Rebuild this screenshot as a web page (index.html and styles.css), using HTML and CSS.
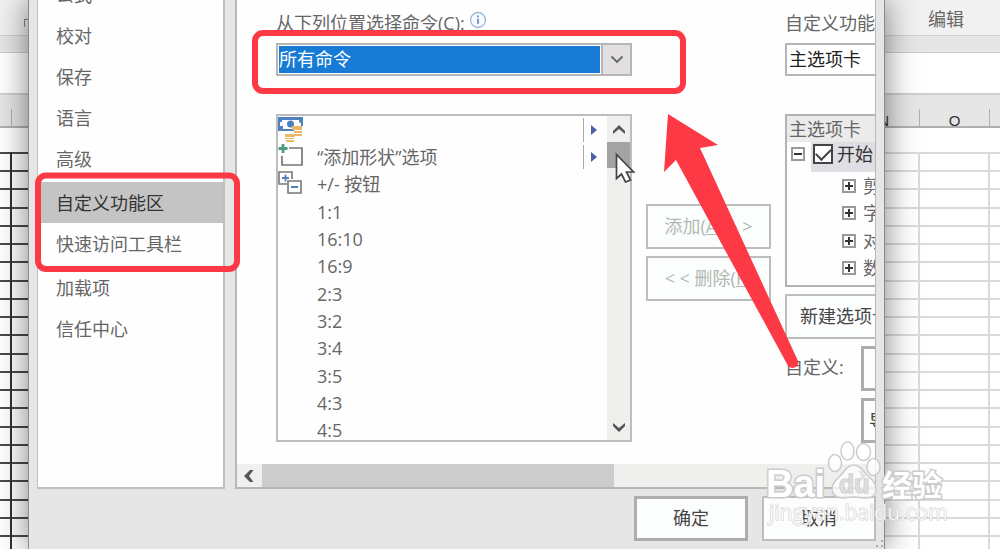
FILE: index.html
```html
<!DOCTYPE html>
<html lang="zh-CN">
<head>
<meta charset="utf-8">
<meta name="viewport" content="width=device-width, initial-scale=1">
<title>自定义功能区</title>
<link rel="stylesheet" href="styles.css">
</head>
<body>
<div class="desktop">
  <div class="workbook">
    <div class="ribbon"><span class="corner"></span><span>编辑</span></div>
    <div class="ribbon-edge"></div>
    <div class="formula-bar"></div>
    <div class="col-heads">
      <span class="head head-left"></span>
      <span class="head head-n">N</span>
      <span class="head head-o">O</span>
      <span class="head-rest"></span>
    </div>
    <div class="cells">
      <div class="col bold head-left"></div>
      <div class="col bold col-covered"></div>
      <div class="col head-n"></div>
      <div class="col head-o"></div>
      <div class="col head-rest"></div>
    </div>
  </div>

  <section class="dialog" aria-label="选项">
    <div class="body">
      <nav class="nav">
        <div class="nav-list">
          <a href="#formula">公式</a>
          <a href="#proof">校对</a>
          <a href="#save">保存</a>
          <a href="#language">语言</a>
          <a href="#advanced">高级</a>
          <a class="group active" href="#ribbon">自定义功能区</a>
          <a href="#quick">快速访问工具栏</a>
          <a class="group" href="#addins">加载项</a>
          <a href="#trust">信任中心</a>
        </div>
      </nav>
      <main class="panel">
        <div class="columns">
          <div class="column">
            <div class="caption">
              <label for="source">从下列位置选择命令(C):</label>
              <svg class="info" viewBox="0 0 18 18"><circle cx="9" cy="9" r="7.5" fill="#f7fbff" stroke="#9db9dc" stroke-width="1.3"/><path d="M9 7.8v5M9 4.6v1.6" stroke="#5b87b8" stroke-width="1.7"/></svg>
            </div>
            <div class="combo">
              <select id="source" class="picked"><option>所有命令</option></select>
              <span class="caret"><svg viewBox="0 0 14 9"><path d="M1.500 1.500 7 7l5.500-5.500" fill="none" stroke="#666" stroke-width="1.800"/></svg></span>
            </div>
            <div class="list">
              <ul class="commands">
                <li>
                  <svg class="icon" viewBox="0 0 26 26"><path d="M0 0h25v9h-9v5H0z" fill="#4d80bd"/><path d="M4 3h17v1q0 2 2 2v3h-7v3H5V9H2V5h2z" fill="#fff"/><circle cx="12.500" cy="7" r="3.500" fill="#4d80bd"/><path d="M14 9h10v4H14zM16 14h8v2h-8zM17 17h7v2h-7zM7 17h10v3H7zM7 21h9v1H7zM8 23h8v2H8z" fill="#e8b867"/></svg>
                  <span></span><i class="more"></i>
                </li>
                <li>
                  <svg class="icon" viewBox="0 0 26 26"><path d="M11 4h13v17H4v-9" fill="none" stroke="#777" stroke-width="1.700"/><path d="M5 0v9M.5 4.500h9" stroke="#4f9a80" stroke-width="2.800"/></svg>
                  <span>“添加形状”选项</span><i class="more"></i>
                </li>
                <li>
                  <svg class="icon" viewBox="0 0 26 26"><path d="M9 13H1V1h13v7M10 10h13v12H10z" fill="none" stroke="#777" stroke-width="1.600"/><path d="M4 7h7M7.500 3.500v7M13 16h7" stroke="#4d80bd" stroke-width="1.800"/></svg>
                  <span>+/- 按钮</span>
                </li>
                <li><span>1:1</span></li>
                <li><span>16:10</span></li>
                <li><span>16:9</span></li>
                <li><span>2:3</span></li>
                <li><span>3:2</span></li>
                <li><span>3:4</span></li>
                <li><span>3:5</span></li>
                <li><span>4:3</span></li>
                <li><span>4:5</span></li>
              </ul>
              <div class="vbar">
                <svg class="arrow" viewBox="0 0 12 10"><path d="M0 9V6L6 0l6 6v3L6 4z" fill="#555"/></svg>
                <div class="vthumb"></div>
                <svg class="arrow" viewBox="0 0 12 10"><path d="M0 1v3l6 6 6-6V1L6 6z" fill="#555"/></svg>
              </div>
            </div>
          </div>

          <div class="column transfer">
            <button class="btn faded" type="button">添加(<u>A</u>) &gt; &gt;</button>
            <button class="btn faded" type="button">&lt; &lt; 删除(<u>R</u>)</button>
          </div>

          <div class="column">
            <div class="caption"><label for="target">自定义功能区</label></div>
            <div class="combo open-end">
              <select id="target" class="plain"><option>主选项卡</option></select>
            </div>
            <div class="tree">
              <div class="tree-head">主选项卡</div>
              <div class="tree-root">
                <button class="toggle" type="button" aria-label="折叠"></button>
                <label class="tab"><input type="checkbox" checked><span>开始</span></label>
              </div>
              <div class="tree-item"><button class="toggle plus" type="button" aria-label="展开"></button><span>剪贴板</span></div>
              <div class="tree-item"><button class="toggle plus" type="button" aria-label="展开"></button><span>字体</span></div>
              <div class="tree-item"><button class="toggle plus" type="button" aria-label="展开"></button><span>对齐方式</span></div>
              <div class="tree-item"><button class="toggle plus" type="button" aria-label="展开"></button><span>数字</span></div>
            </div>
            <button class="btn new-tab" type="button">新建选项卡</button>
            <div class="custom">
              <span class="custom-label">自定义:</span>
              <div class="custom-actions">
                <button class="btn strong" type="button" aria-label="重置"></button>
                <button class="btn strong" type="button">导入/导出</button>
              </div>
            </div>
          </div>
        </div>
        <div class="hbar">
          <svg class="harrow" viewBox="0 0 10 12"><path d="M9.500 0H6L0 6l6 6h3.500L5 6z" fill="#555"/></svg>
          <div class="htrack"><div class="hthumb"></div></div>
          <svg class="harrow" viewBox="0 0 10 12"><path d="M1 1h3l5 5-5 5H1l4-5z" fill="#888"/></svg>
        </div>
      </main>
    </div>
    <footer class="footer">
      <button class="btn strong" type="button">确定</button>
      <button class="btn" type="button">取消</button>
    </footer>
    <svg class="grip" viewBox="0 0 9 9"><path d="M6 0h2v2H6zM6 5h2v2H6zM1 5h2v2H1z" fill="#aaa"/></svg>
  </section>

  <svg class="marks" viewBox="0 0 1000 549">
    <rect x="255" y="33" width="428" height="58" rx="8" fill="none" stroke="#fd3946" stroke-width="6"/>
    <rect x="38" y="175.500" width="199" height="93.500" rx="8" fill="none" stroke="#fd3946" stroke-width="6"/>
    <path d="M668 114l50 31-18 3 98 213q1 6-5 7-4 0-6-4L676 160l-12 12z" fill="#fd3946"/>
    <path d="M616.500 154.500v24l5-4.500 4 8 5-2-4-8h7z" fill="#fff" stroke="#444" stroke-width="1.700"/>
    <g class="brand">
      <text x="766" y="497" font-size="38">Bai</text>
      <ellipse cx="835" cy="463" rx="6.500" ry="8.500"/>
      <ellipse cx="847.500" cy="451" rx="6.500" ry="9"/>
      <ellipse cx="863.500" cy="452" rx="7" ry="8.500"/>
      <ellipse cx="873.500" cy="467" rx="6.500" ry="8.500"/>
      <path d="M854 465c7 0 9 7 14 11 5 4 8 8 8 13 0 6-4 9-10 9-5 0-8-1-12-1s-8 1-12 1c-6 0-10-4-10-9 0-6 4-9 8-13s7-11 14-11z"/>
      <text class="du" x="839" y="493" font-size="25">du</text>
      <text class="cn" x="882" y="496" font-size="30">经验</text>
    </g>
    <text class="site" x="769" y="520" font-size="21">jingyan.baidu.com</text>
  </svg>
</div>
</body>
</html>
```
FILE: styles.css
```css
* { box-sizing: border-box; }

body {
  margin: 0;
  color: #666;
  font: 18px/24px "Open Sans", "Noto Sans CJK SC", sans-serif;
}

button, select { font: inherit; color: inherit; }

.desktop { position: relative; height: 100vh; overflow: hidden; background: #fff; }

/* Workbook behind the dialog */
.workbook { display: flex; flex-direction: column; height: 100%; }
.ribbon {
  display: flex;
  justify-content: space-between;
  height: 36px;
  padding: 7px 36px 0 24px;
  background: #f1f1f1;
  border-bottom: 1px solid #d0d0d0;
}
.corner { width: 8px; height: 8px; margin-top: 12px; border: solid #888; border-width: 1px 0 0 1px; }
.ribbon-edge { height: 17px; background: #e6e6e6; border-bottom: 1px solid #ccc; }
.formula-bar { height: 40px; }
.col-heads {
  display: flex;
  align-items: flex-end;
  height: 35px;
  background: #e6e6e6;
  border-top: 2px solid #cfcfcf;
  border-bottom: 2px solid #b0b0b0;
  overflow: hidden;
}
.head {
  height: 17px;
  border-right: 1px solid #b0b0b0;
  color: #333;
  font: 15px/24px "Liberation Sans", sans-serif;
}
.head-left { width: 12px; }
.head-n { flex: 1; text-align: right; padding-right: 30px; }
.head-o { width: 70px; text-align: center; }
.head-rest { width: 10px; }
.cells { display: flex; flex: 1; }
.col {
  --line: #dadada;
  border-right: 2px solid #dadada;
  background: linear-gradient(var(--line) 2px, transparent 2px 18px, var(--line) 18px 20px, transparent 20px 36px, var(--line) 36px 38px, transparent 38px 55px, var(--line) 55px 57px, transparent 57px) 0 0 / 100% 73px;
  margin-top: 24px;
}
.col:last-child { border-right: 0; }
.bold { --line: #4a4a4a; border-color: #333; }
.col-covered { width: 60px; }

/* Dialog */
.dialog {
  position: absolute;
  inset: 0 115px 0 28px;
  display: flex;
  flex-direction: column;
  background: #e6e6e6;
  border: solid #8a8a8a;
  border-width: 0 1px;
  box-shadow: 0 0 30px rgba(0, 0, 0, .5);
}
.body { display: flex; flex: 1; gap: 10px; min-height: 0; padding: 0 8px; }
.nav {
  width: 188px;
  overflow: hidden;
  background: #fefefe;
  border: solid #c0c0c0;
  border-width: 0 2px 2px 1px;
}
.nav-list { display: flex; flex-direction: column; margin-top: -26px; }
.nav-list a {
  padding: 9px 0 8px 18px;
  color: #666;
  text-decoration: none;
  white-space: nowrap;
}
.nav-list .group { margin-top: 3px; }
.nav-list .active { background: #c4c4c4; color: #333; }

.panel {
  display: flex;
  flex: 1;
  flex-direction: column;
  min-width: 0;
  background: #fefefe;
  border: solid #b8b8b8;
  border-width: 0 1px 2px 2px;
}
.columns {
  display: grid;
  flex: 1;
  grid-template-columns: 356fr 125fr 90fr;
  gap: 14px;
  min-height: 0;
  padding-left: 39px;
  overflow: hidden;
}
.column { display: flex; flex-direction: column; min-width: 0; min-height: 0; }
.caption { display: flex; gap: 4px; padding-top: 11px; white-space: nowrap; }
.info { width: 18px; height: 18px; }

.combo {
  display: flex;
  height: 33px;
  margin-top: 8px;
  border: 2px solid #b4b6b8;
  background: #fff;
}
.combo select { flex: 1; min-width: 0; padding: 0 0 2px; border: 0; appearance: none; }
.combo .picked { margin: 1px; background: #177bd5; color: #fff; }
.combo .plain { padding-left: 2px; background: #fff; color: #222; text-overflow: clip; }
.open-end { border-right: 0; }
.caret {
  display: grid;
  place-items: center;
  width: 29px;
  background: #e1dfdf;
  border-left: 2px solid #b4b6b8;
}
.caret svg { width: 14px; height: 9px; }

.list {
  display: flex;
  flex: 1;
  min-height: 0;
  margin: 38px 0 22px;
  border: 2px solid #bdbdbd;
}
.commands { flex: 1; margin: 0; padding: 0; overflow: hidden; list-style: none; }
.commands li {
  display: grid;
  grid-template-columns: 26px 1fr 24px;
  column-gap: 13px;
  align-items: center;
  height: 27px;
}
.commands li:nth-child(3n) { height: 28px; }
.commands span { grid-column: 2; white-space: nowrap; }
.icon { width: 26px; height: 26px; }
.more {
  display: flex;
  align-items: center;
  height: 24px;
  padding-left: 7px;
  border-left: 1px solid #aaa;
}
.more::after {
  content: "";
  border: 5px solid transparent;
  border-left: 6px solid #4c62a4;
  border-right: 0;
}
.vbar {
  display: flex;
  flex-direction: column;
  align-items: center;
  justify-content: space-between;
  width: 23px;
  padding: 9px 0 8px;
  background: #efefee;
}
.arrow { width: 12px; height: 10px; }
.vthumb { width: 23px; height: 26px; margin: 7px 0 auto; background: #a3a3a3; }

.btn {
  flex-shrink: 0;
  height: 45px;
  padding: 0 13px 2px;
  background: #fcfefe;
  border: 2px solid #bdbdbd;
  border-radius: 0;
  color: #444;
  white-space: nowrap;
}
.strong { border: 3px solid #adadad; }
.faded { padding: 0 0 2px; color: #b1b9b1; }
.transfer { gap: 7px; padding-top: 204px; }

.tree {
  height: 173px;
  margin-top: 38px;
  border: solid #b4b4b4;
  border-width: 2px 0 2px 2px;
  overflow: hidden;
  color: #666;
}
.tree-head { padding-left: 2px; background: #ebebeb; white-space: nowrap; line-height: 26px; }
.tree-root { display: flex; align-items: center; gap: 6px; padding-left: 4px; height: 30px; }
.tab {
  display: flex;
  flex: 1;
  gap: 4px;
  height: 30px;
  padding: 0 0 6px 2px;
  background: #dedee3;
  color: #333;
  align-items: center;
  white-space: nowrap;
}
.tab input {
  flex: none;
  display: grid;
  place-items: center;
  width: 20px;
  height: 20px;
  margin: 0;
  appearance: none;
  background: #fff;
  border: 2px solid #444;
}
.tab input:checked::after {
  content: "";
  width: 13px;
  height: 7px;
  border: solid #444;
  border-width: 0 0 2px 2px;
  transform: translateY(-2px) rotate(-45deg);
}
.toggle {
  flex: none;
  width: 14px;
  height: 14px;
  padding: 0;
  border: 2px solid #999;
  background: linear-gradient(#333, #333) center / 8px 2px no-repeat #fff;
}
.tree-root .toggle { margin-bottom: 6px; }
.toggle.plus {
  background: linear-gradient(#333, #333) center / 8px 2px no-repeat,
    linear-gradient(#333, #333) center / 2px 8px no-repeat #fff;
}
.tree-item {
  display: flex;
  align-items: center;
  gap: 7px;
  height: 27px;
  padding-left: 55px;
  white-space: nowrap;
}
.tree-item:nth-child(even) { height: 28px; }
.new-tab { width: 130px; margin-top: 7px; text-align: left; }
.custom { display: flex; gap: 14px; margin-top: 7px; white-space: nowrap; }
.custom-label { flex: none; width: 62px; padding-top: 9px; }
.custom-actions { display: flex; flex-direction: column; gap: 7px; }
.custom .btn { width: 130px; padding: 0 5px; text-align: left; }

.hbar {
  display: flex;
  align-items: center;
  justify-content: space-between;
  height: 23px;
  padding: 0 8px 0 7px;
  background: #efefee;
}
.harrow { width: 10px; height: 12px; }
.htrack { flex: 1; margin: 0 8px; height: 23px; }
.hthumb { width: 60%; height: 23px; background: #ccc; }

.footer {
  display: flex;
  justify-content: flex-end;
  gap: 14px;
  padding: 7px 8px 8px;
}
.footer .btn { width: 114px; }
.grip { position: absolute; right: 0; bottom: 0; width: 9px; height: 9px; }

/* Annotations over the window */
.marks { position: absolute; top: 0; left: 0; width: 1000px; height: 549px; pointer-events: none; }
.brand { fill: #fff; fill-opacity: .75; stroke: #ccc; stroke-width: 1.5; font-family: "Liberation Sans", sans-serif; font-weight: 700; }
.brand text { paint-order: stroke; stroke-width: 3; fill-opacity: 1; }
.brand .du { fill: #ddd; stroke: #bbb; stroke-width: 1; }
.brand .cn { font-family: "Noto Sans CJK SC", sans-serif; }
.site { fill: #fff; fill-opacity: .8; stroke: #ccc; stroke-width: 1; paint-order: stroke; font-family: "Open Sans", sans-serif; }
```
